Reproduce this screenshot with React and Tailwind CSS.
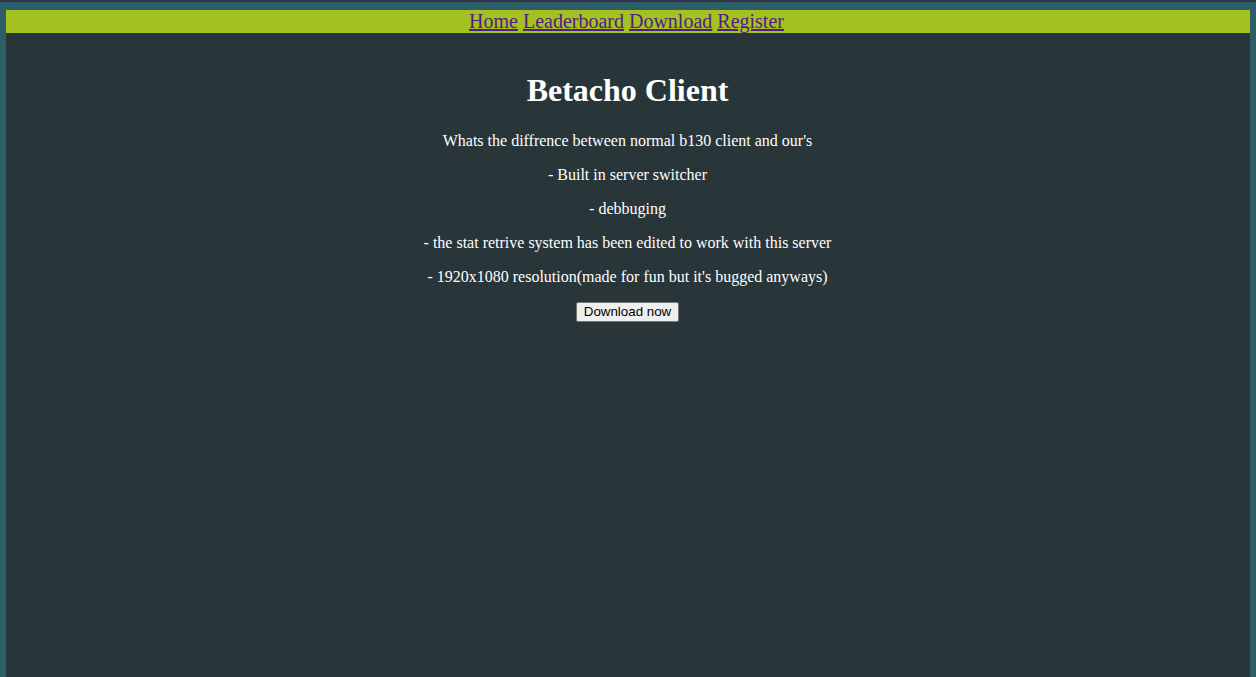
export default function App() {
  const serif = { fontFamily: '"Liberation Serif", "Times New Roman", serif' };
  return (
    <div className="min-h-screen bg-[#2b5e66]" style={serif}>
      <div className="h-[2px] bg-[#35344a]" />
      <div className="px-[6px] pt-[8px] flex flex-col min-h-[675px]">
        <div className="flex-1 flex flex-col bg-[#283539]">
          <nav className="bg-[#a3c11f] h-[23px] flex justify-center items-center text-[20px] leading-[23px] gap-[5px] pr-[3px]">
            <a href="#" className="text-[#551a8b] underline">Home</a>
            <a href="#" className="text-[#551a8b] underline">Leaderboard</a>
            <a href="#" className="text-[#551a8b] underline">Download</a>
            <a href="#" className="text-[#551a8b] underline">Register</a>
          </nav>
          <div className="flex flex-col items-center text-white text-center pr-[1px]">
            <h1 className="mt-[39px] text-[32px] leading-[37px] font-bold">Betacho Client</h1>
            <div className="mt-[23px] flex flex-col gap-[16px] text-[16px] leading-[18px]">
              <p>Whats the diffrence between normal b130 client and our's</p>
              <p>- Built in server switcher</p>
              <p>- debbuging</p>
              <p>- the stat retrive system has been edited to work with this server</p>
              <p>- 1920x1080 resolution(made for fun but it's bugged anyways)</p>
            </div>
            <button
              className="mt-[16px] h-[20px] px-[7px] bg-[#efefef] border border-[#767676] rounded-[2px] text-black text-[13.33px] leading-[16px]"
              style={{ fontFamily: '"Liberation Sans", Arial, sans-serif' }}
            >
              Download now
            </button>
          </div>
        </div>
      </div>
    </div>
  );
}
